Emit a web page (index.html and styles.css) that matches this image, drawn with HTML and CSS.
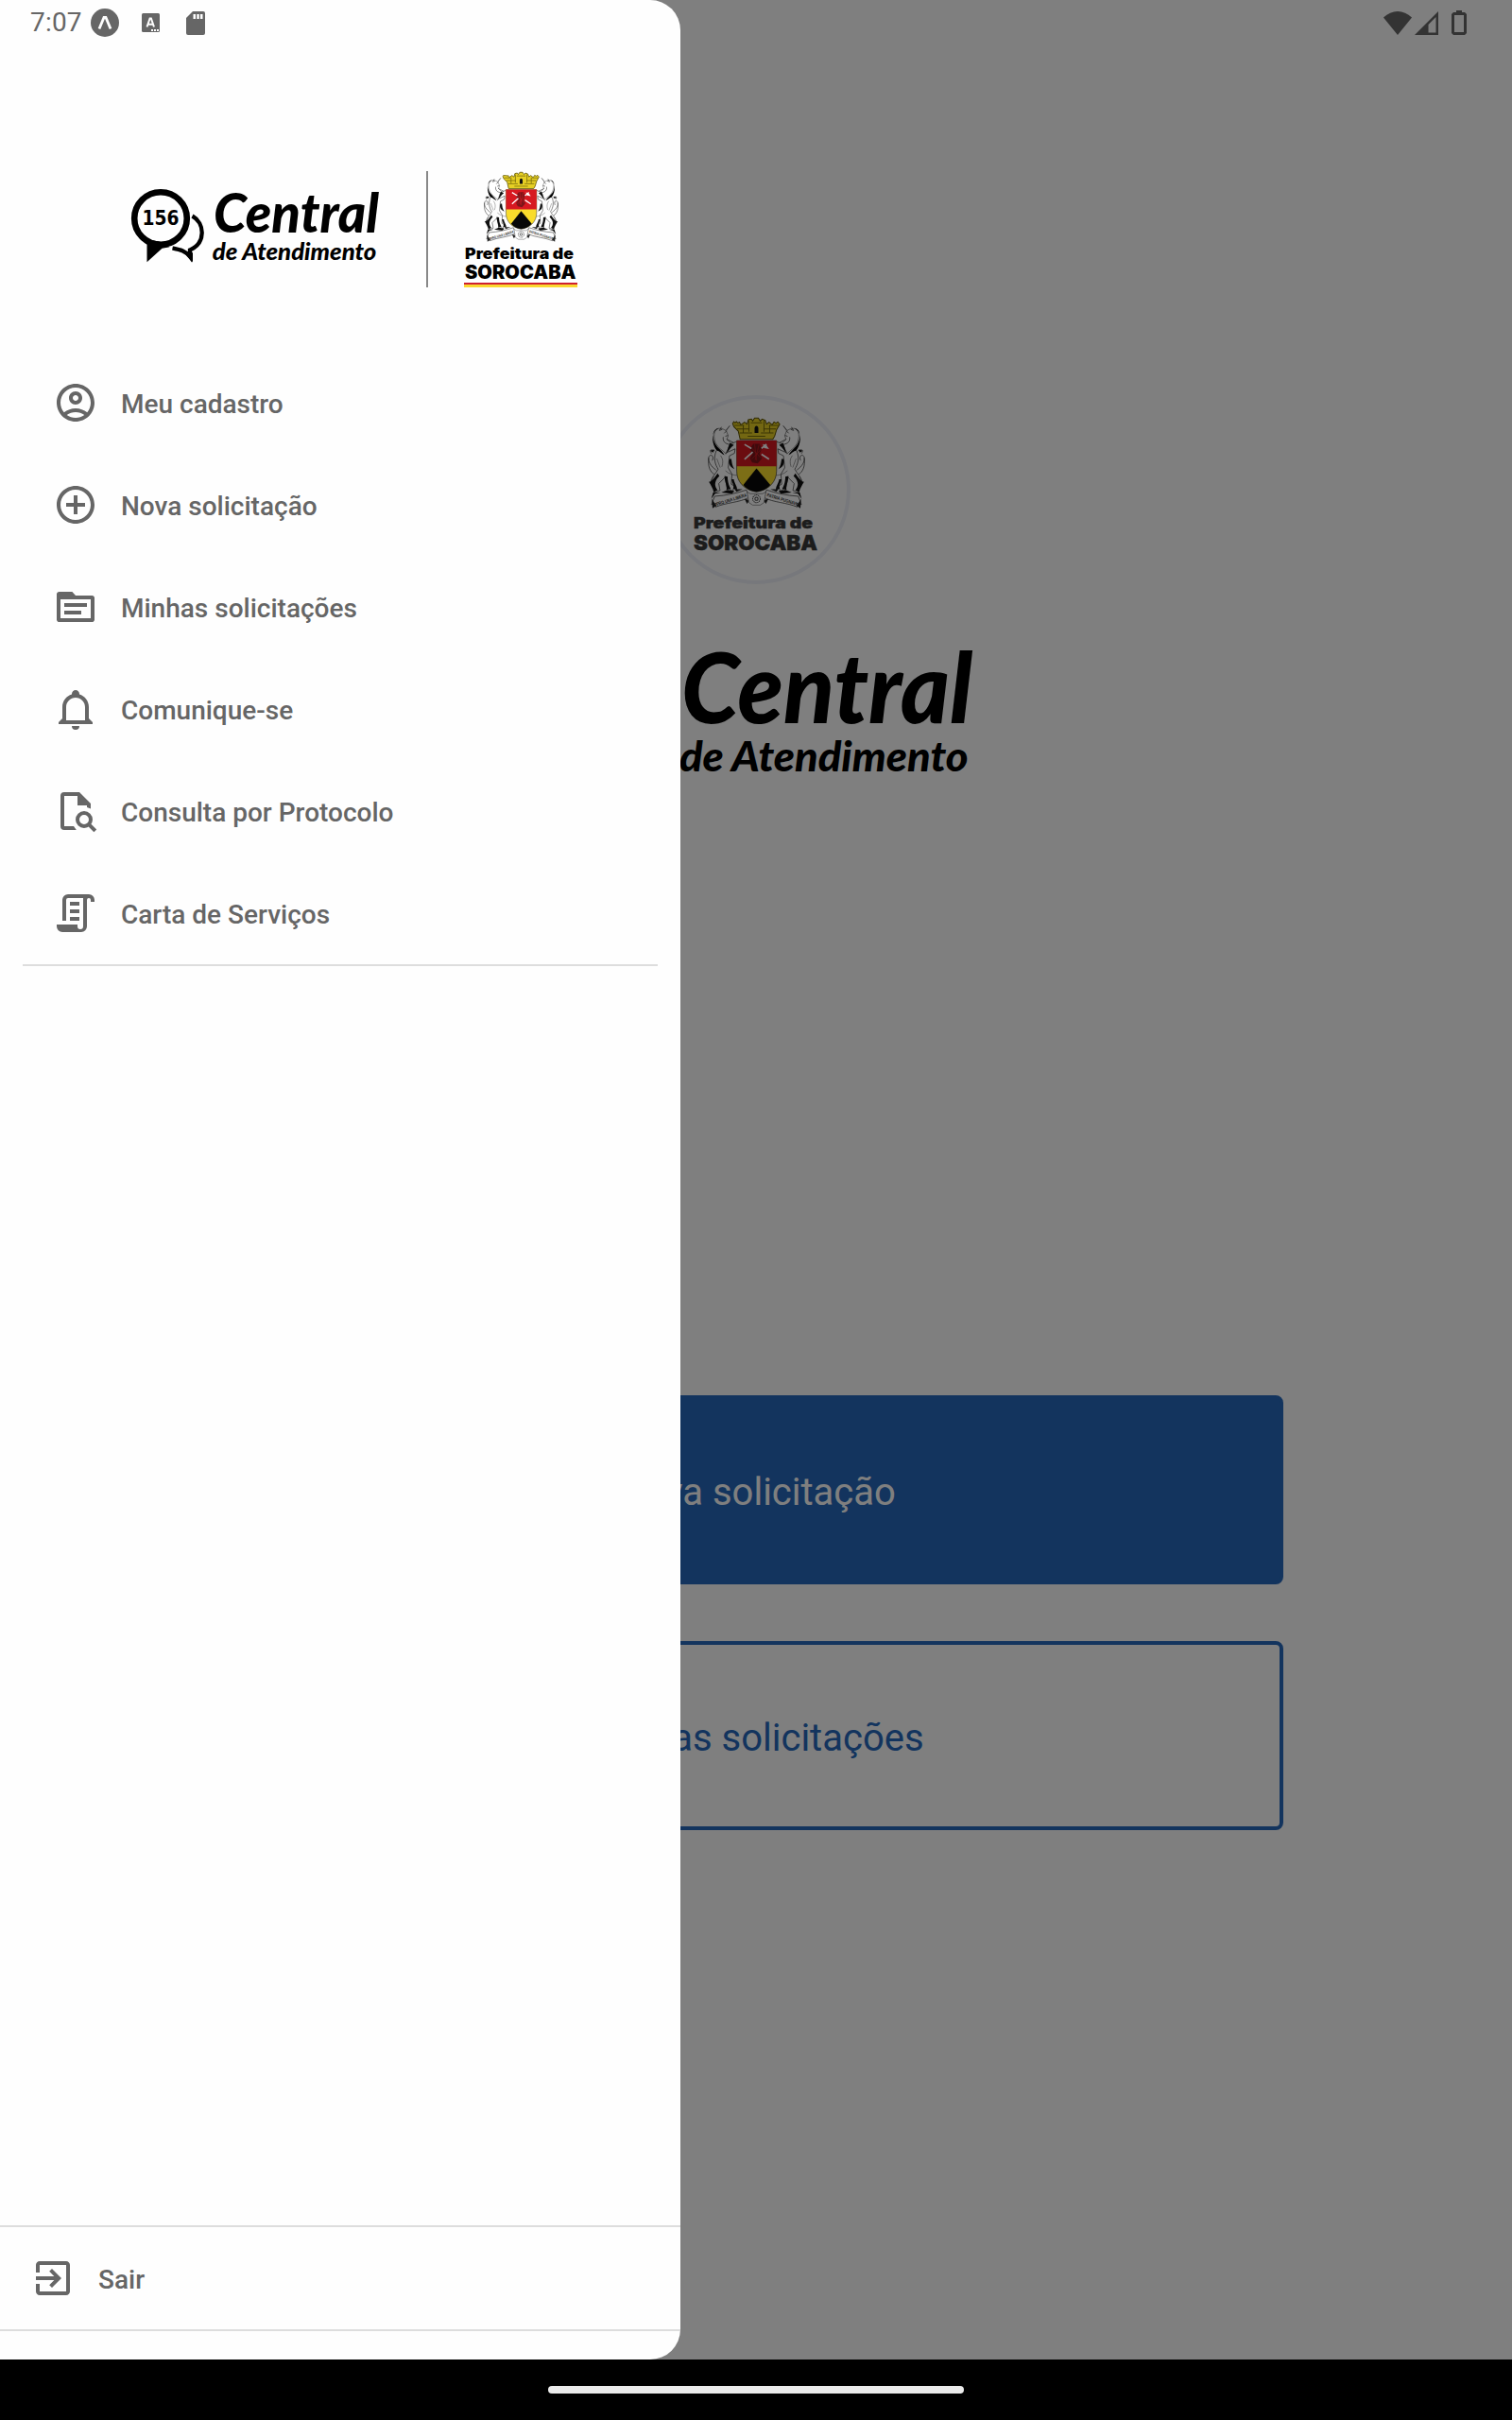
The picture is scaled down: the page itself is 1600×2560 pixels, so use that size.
FILE: index.html
```html
<!DOCTYPE html>
<html lang="pt-BR">
<head>
<meta charset="utf-8">
<title>Central de Atendimento</title>
<link rel="stylesheet" href="styles.css">
</head>
<body>
<svg class="defs" aria-hidden="true">
  <symbol id="brand" viewBox="138 200 264 80">
    <circle cx="170" cy="231" r="27.8" fill="none" stroke="#000" stroke-width="6.6"/>
    <path d="M155.5 253v24.3l16-14.5 8-1.5-9-5.300z"/>
    <path d="M203.500 228.500C217 236 218 257 201 264.500V271.500C196 265 190 264 182.500 262.500" fill="none" stroke="#000" stroke-width="4.300"/>
    <path d="M193 266l11 11.300v-10z"/>
    <text class="brand-number" x="150.500" y="238.400" textLength="39" lengthAdjust="spacingAndGlyphs">156</text>
    <text class="brand-title" x="226" y="246" textLength="175" lengthAdjust="spacingAndGlyphs">Central</text>
    <text class="brand-sub" x="224.800" y="275" textLength="173.500" lengthAdjust="spacingAndGlyphs">de Atendimento</text>
  </symbol>
  <g id="supporter" stroke-linejoin="round" stroke-linecap="round">
    <path d="M88 46L76 60C66 54 55 50 46 58C36 68 38 86 44 100C52 116 66 122 76 133L92 100L80 88L84 76L78 62Z" fill="#fff" stroke="#222" stroke-width="1.500"/>
    <path d="M54 52C38 54 32 72 38 92C44 112 62 120 72 138C62 134 56 124 48 124C34 108 24 66 54 52Z" fill="#000"/>
    <path d="M62 50l-6 10 8-3M78 62l-6 6M76 78l6-2M68 82C66 94 74 102 88 104L108 96M80 88L100 98M46 124C36 146 42 168 52 182C44 198 34 204 30 218C30 230 42 240 42 254L58 250L54 228L74 208L80 240L98 252L104 236L94 230L96 198L84 178L88 140L104 132L106 118L84 128" fill="none" stroke="#222" stroke-width="2"/>
    <path d="M44 184C30 174 18 158 22 144C28 132 40 140 34 154M40 124C28 116 24 124 30 132M22 148C18 172 26 190 38 198" fill="none" stroke="#222" stroke-width="2"/>
    <path d="M90 100C82 112 84 124 74 138C86 126 90 114 102 106ZM26 124l14-4-4 10ZM50 196C42 208 30 224 22 222C28 232 36 244 38 256L50 248C40 236 38 222 56 204ZM72 204C72 222 82 236 78 248L92 244C84 232 82 216 82 206ZM94 214C96 226 104 234 100 244L112 248C114 236 102 226 102 214ZM88 150C82 164 90 176 104 182C96 170 96 162 94 150ZM36 256l-6 20 12-16 18-4ZM82 248l-20 8 34 4 8-8Z" fill="#111"/>
    <path d="M60 140C68 150 68 160 64 174M48 150l10 26M76 188C86 198 102 202 112 202M38 206l-8 12" fill="none" stroke="#444" stroke-width="1.500"/>
    <path d="M42 268C78 266 112 258 142 248L150 272C120 288 76 288 44 302L46 290L32 294Z" fill="#fff" stroke="#222" stroke-width="2"/>
    <path d="M32 276l14 22-12 8ZM104 246l26 0-20 8ZM136 276l16 4-8 12Z" fill="#222"/>
  </g>
  <symbol id="crest" viewBox="19 20 310 287" preserveAspectRatio="none">
    <use href="#supporter"/>
    <use href="#supporter" transform="translate(348 0) scale(-1 1)"/>
    <path d="M98 38L102 32L106 36L110 32L114 36L120 34L124 42L136 34L144 40L148 26L158 24L162 30L168 21H180L186 30L192 24L202 28L206 40L214 34L224 42L230 33L236 37L242 33L248 40L238 58L232 78L226 88H122L116 62L102 48Z" fill="#e6cf24" stroke="#5c5106" stroke-width="3"/>
    <path d="M104 44h30M112 55h40M196 55h40M214 44h30M120 68h40M188 68h40M132 45v22M150 30v34M198 30v34M216 45v22M156 36h36M146 78h56" stroke="#776a0b" stroke-width="3" fill="none"/>
    <path d="M168 68V54C168 43 180 43 180 54V68Z" fill="#111"/>
    <path d="M111 92H238V188C238 222 214 248 174 254C134 248 111 222 111 188Z" fill="#f9dc2c" stroke="#333" stroke-width="2"/>
    <path d="M111 92H238V173H111Z" fill="#d71921"/>
    <path d="M174 180L132 232C144 246 158 252 174 254C190 252 206 246 218 232Z" fill="#080808"/>
    <path d="M164 102l20 0 7 17-7 14 8 15-14 16-18-3-7-13 8-14-8-16Z" fill="#7d1519"/>
    <path d="M168 103l6 52M182 105l-12 48M160 117l28 30M190 118l-31 33" stroke="#d71921" stroke-width="2"/>
    <path d="M136 104l22 13M136 151l26-23M190 135l24 16M190 117l16-14" stroke="#fff" stroke-width="5"/>
    <path d="M194 103l12 4 8 12-16-3Z" fill="#fff"/>
    <path d="M144 254L154 260H194L204 254L198 288L186 296H162L150 288Z" fill="#fff" stroke="#666" stroke-width="2"/>
    <circle cx="174" cy="276" r="12" fill="none" stroke="#444" stroke-width="3" stroke-dasharray="4 2"/>
    <circle cx="174" cy="276" r="5" fill="none" stroke="#444" stroke-width="3"/>
    <text class="motto" transform="translate(48 298) rotate(-17)" textLength="100" lengthAdjust="spacingAndGlyphs">PRO UNA LIBERA</text>
    <text class="motto" transform="translate(206 268) rotate(17)" textLength="100" lengthAdjust="spacingAndGlyphs">PATRIA PUGNAVI</text>
  </symbol>
</svg>

<div class="device">
  <main class="home">
    <div class="seal">
      <svg class="seal-crest"><use href="#crest"/></svg>
      <svg class="seal-name" viewBox="0 0 132 40">
        <text class="city-line" x="0" y="13.800" font-size="16.500" textLength="126" lengthAdjust="spacingAndGlyphs">Prefeitura de</text>
        <text class="city-line" x="0" y="37" font-size="22" textLength="131" lengthAdjust="spacingAndGlyphs">SOROCABA</text>
      </svg>
    </div>
    <svg class="home-brand"><use href="#brand"/></svg>
    <div class="actions">
      <button class="action action-primary">Nova solicitação</button>
      <button class="action action-outline">Minhas solicitações</button>
    </div>
  </main>

  <div class="scrim"></div>

  <aside class="drawer">
    <header class="drawer-head">
      <svg class="drawer-brand"><use href="#brand"/></svg>
      <span class="head-rule"></span>
      <div class="city">
        <svg class="city-crest"><use href="#crest"/></svg>
        <svg class="city-name" viewBox="0 0 120 48">
          <text class="city-line" x="1" y="18" font-size="15.500" textLength="115" lengthAdjust="spacingAndGlyphs">Prefeitura de</text>
          <text class="city-line" x="1" y="38.700" font-size="19.500" textLength="117.500" lengthAdjust="spacingAndGlyphs">SOROCABA</text>
          <path d="M0 43h120v2H0z" fill="#cf2030"/>
          <path d="M0 45h120v3H0z" fill="#fbd930"/>
        </svg>
      </div>
    </header>
    <nav class="menu">
      <a class="item"><svg class="icon" viewBox="0 0 24 24"><path fill-rule="evenodd" d="M12 2C6.480 2 2 6.480 2 12s4.480 10 10 10 10-4.480 10-10S17.520 2 12 2zM7.350 18.500C8.660 17.560 10.260 17 12 17s3.340.56 4.650 1.500C15.340 19.440 13.740 20 12 20s-3.340-.56-4.650-1.500zm10.790-1.380C16.450 15.800 14.320 15 12 15s-4.450.8-6.140 2.120C4.700 15.730 4 13.950 4 12c0-4.420 3.580-8 8-8s8 3.580 8 8c0 1.950-.7 3.730-1.860 5.120zM12 6c-1.930 0-3.500 1.570-3.500 3.500S10.070 13 12 13s3.500-1.570 3.500-3.500S13.930 6 12 6zm0 5c-.83 0-1.500-.67-1.500-1.500S11.170 8 12 8s1.500.67 1.500 1.500S12.830 11 12 11z"/></svg><span class="label">Meu cadastro</span></a>
      <a class="item"><svg class="icon" viewBox="0 0 24 24"><path d="M13 7h-2v4H7v2h4v4h2v-4h4v-2h-4V7zm-1-5C6.480 2 2 6.480 2 12s4.480 10 10 10 10-4.480 10-10S17.520 2 12 2zm0 18c-4.410 0-8-3.590-8-8s3.590-8 8-8 8 3.590 8 8-3.590 8-8 8z"/></svg><span class="label">Nova solicitação</span></a>
      <a class="item"><svg class="icon" viewBox="0 0 24 24"><path fill-rule="evenodd" d="M3.300 4H10.200L12 6H20.700C21.400 6 22 6.600 22 7.300V18.700C22 19.400 21.400 20 20.700 20H3.300C2.600 20 2 19.400 2 18.700V5.300C2 4.600 2.600 4 3.300 4ZM4 8V18H20V8ZM6 10H18V12H6ZM6 14H15V16H6Z"/></svg><span class="label">Minhas solicitações</span></a>
      <a class="item"><svg class="icon" viewBox="0 0 24 24"><path fill-rule="evenodd" d="M10 21H14A2 2 0 0 1 10 21ZM12 2C10.900 2 10 2.900 10 4V4.290C7.120 5.140 5 7.820 5 11V17L3 19V20H21V19L19 17V11C19 7.820 16.880 5.140 14 4.290V4C14 2.900 13.100 2 12 2ZM12 6C14.760 6 17 8.240 17 11V18H7V11C7 8.240 9.240 6 12 6Z"/></svg><span class="label">Comunique-se</span></a>
      <a class="item"><svg class="icon" viewBox="0 0 24 24"><path d="M12.400 22H6A2 2 0 0 1 4 20V4A2 2 0 0 1 6 2H14L20 8V10.800L18 10V9H13V4H6V20H11Z"/><circle cx="16.500" cy="16.500" r="3.500" fill="none" stroke="currentColor" stroke-width="2"/><path d="M18.900 18.900L22.400 22.400" stroke="currentColor" stroke-width="2"/></svg><span class="label">Consulta por Protocolo</span></a>
      <a class="item"><svg class="icon" viewBox="0 0 24 24"><path d="M5 16V5A3 3 0 0 1 8 2H19A3 3 0 0 1 22 5V6H20V5A1 1 0 0 0 18 5V19A3 3 0 0 1 15 22H5A3 3 0 0 1 2 19V18H13V19A1.500 1.500 0 0 0 16 19V4H8A1 1 0 0 0 7 5V16ZM9 6H14V8H9ZM9 10H14V12H9ZM9 14H14V16H9Z"/></svg><span class="label">Carta de Serviços</span></a>
    </nav>
    <footer class="drawer-foot">
      <a class="item item-exit"><svg class="icon" viewBox="0 0 24 24"><path d="M10.090 15.590L11.500 17l5-5-5-5-1.410 1.410L12.670 11H3v2h9.670l-2.580 2.590zM19 3H5c-1.110 0-2 .9-2 2v4h2V5h14v14H5v-4H3v4c0 1.100.89 2 2 2h14c1.100 0 2-.9 2-2V5c0-1.100-.9-2-2-2z"/></svg><span class="label">Sair</span></a>
    </footer>
  </aside>

  <div class="status">
    <div class="status-left">
      <span class="clock">7:07</span>
      <svg class="expo" viewBox="0 0 30 30"><circle cx="15" cy="15" r="15"/><path d="M9 21.500L14 9.500H16L21 21.500" fill="none" stroke="#fefefe" stroke-width="2.800"/></svg>
      <svg class="lang" viewBox="0 0 19 20"><rect width="19" height="20" rx="1.500"/><path d="M5.500 14.500L8.600 5.500H9.900L13 14.500M6.500 11.800H12" fill="none" stroke="#fefefe" stroke-width="2"/><path d="M10 17h2v2h-2zM13 17h2v2h-2zM16 17h2v2h-2z" fill="#fefefe"/></svg>
      <svg class="sdcard" viewBox="0 0 20 25"><path d="M7 0H18A2 2 0 0 1 20 2V23A2 2 0 0 1 18 25H2A2 2 0 0 1 0 23V7Z"/><path d="M7.500 3h2.500v5H7.500zM11.300 3h2.500v5h-2.500zM15 3h2.500v5H15z" fill="#fefefe"/></svg>
    </div>
    <div class="status-right">
      <svg class="wifi" viewBox="0 0 30 25"><path d="M0 6.500C9-2.200 21-2.200 30 6.500L15 25Z"/></svg>
      <svg class="signal" viewBox="0 0 25 25"><path fill-rule="evenodd" d="M25 0V25H0ZM22.500 6L14.500 14V22.500H22.500Z"/></svg>
      <svg class="battery" viewBox="0 0 16 26"><path fill-rule="evenodd" d="M5 0H11V2H14L16 4V24L14 26H2L0 24V4L2 2H5ZM3 5V23H13V5Z"/></svg>
    </div>
  </div>

  <div class="navbar"><span class="handle"></span></div>
</div>
</body>
</html>
```
FILE: styles.css
```css
* { box-sizing: border-box; }
body { margin: 0; font-family: Roboto, "Liberation Sans", sans-serif; }
svg { display: block; flex: none; overflow: visible; }
symbol { overflow: visible; }
.defs { position: absolute; width: 0; height: 0; overflow: hidden; }

.device {
  position: relative;
  display: flex;
  flex-direction: column;
  width: 1600px;
  height: 2560px;
  overflow: hidden;
  background: #fff;
}

/* Home screen */
.home {
  flex: 1;
  display: flex;
  flex-direction: column;
  align-items: center;
  padding-top: 418px;
}
.seal {
  display: flex;
  flex-direction: column;
  align-items: center;
  width: 200px;
  height: 200px;
  padding-top: 20px;
  border: 4px solid #eef1f8;
  border-radius: 50%;
}
.seal-crest { width: 103px; height: 96px; }
.seal-name { width: 132px; height: 40px; margin-top: 7px; margin-right: 1px; fill: #383838; stroke: #383838; }
.home-brand { width: 465px; height: 141px; margin-top: 66px; margin-right: 3px; }
.actions { display: flex; flex-direction: column; gap: 60px; width: 1116px; margin-top: 651px; }
.action {
  height: 200px;
  padding: 5px 0 0;
  border: 4px solid #2669bc;
  border-radius: 8px;
  font: 400 40px/48px Roboto, sans-serif;
}
.action-primary { background: #2669bc; color: #fff; }
.action-outline { background: none; color: #2669bc; }

.scrim { position: absolute; inset: 0 0 64px; background: rgba(0, 0, 0, 0.5); }

/* Drawer */
.drawer {
  position: absolute;
  top: 0;
  left: 0;
  display: flex;
  flex-direction: column;
  width: 720px;
  height: 2496px;
  background: #fefefe;
  border-radius: 0 32px 32px 0;
  overflow: hidden;
  color: #666;
}
.drawer-head { display: flex; height: 372px; padding: 181px 0 0 138px; }
.drawer-brand { width: 264px; height: 80px; margin-top: 19px; }
.head-rule { width: 2px; height: 123px; margin-left: 49px; background: #888; }
.city { display: flex; flex-direction: column; width: 120px; margin-left: 38px; }
.city-crest { width: 79px; height: 74px; margin: 1px 0 0 21px; }
.city-name { width: 120px; height: 48px; }

.menu { margin: 0 24px; height: 650px; border-bottom: 2px solid #ddd; }
.item {
  display: flex;
  align-items: center;
  gap: 24px;
  height: 108px;
  padding-left: 32px;
  font-size: 28px;
  font-weight: 500;
}
.label { padding-top: 2px; }
.icon { width: 48px; height: 48px; fill: currentColor; }
.drawer-foot { height: 112px; margin-top: auto; margin-bottom: 30px; border: solid #ddd; border-width: 2px 0; }

/* Logo lettering */
.brand-number { font: 700 20.5px "DejaVu Sans", sans-serif; }
.brand-title { font: italic 900 58px Lato, sans-serif; }
.brand-sub { font: italic 900 25px Lato, sans-serif; }
.city-line { font-family: Inter, "Liberation Sans", sans-serif; font-weight: 900; stroke-width: 0.4px; }
.motto { font: 700 15px "Liberation Sans", sans-serif; fill: #333; }

/* System bars */
.status {
  position: absolute;
  inset: 0 0 auto;
  display: flex;
  justify-content: space-between;
  height: 48px;
  padding: 0 48px 0 32px;
  color: #666;
}
.status-left, .status-right { display: flex; align-items: center; }
.status-left { fill: #666; }
.status-right { fill: #333; }
.clock { width: 64px; font-size: 28px; line-height: 48px; letter-spacing: 0.2px; }
.expo { width: 30px; height: 30px; }
.lang { width: 19px; height: 20px; margin-left: 23.5px; }
.sdcard { width: 20px; height: 25px; margin-left: 28.5px; }
.wifi { width: 30px; height: 25px; }
.signal { width: 25px; height: 25px; margin-left: 3px; }
.battery { width: 16px; height: 26px; margin-left: 14px; }
.navbar { display: flex; justify-content: center; align-items: center; height: 64px; background: #000; }
.handle { width: 440px; height: 8px; border-radius: 4px; background: #ebebeb; }
```
